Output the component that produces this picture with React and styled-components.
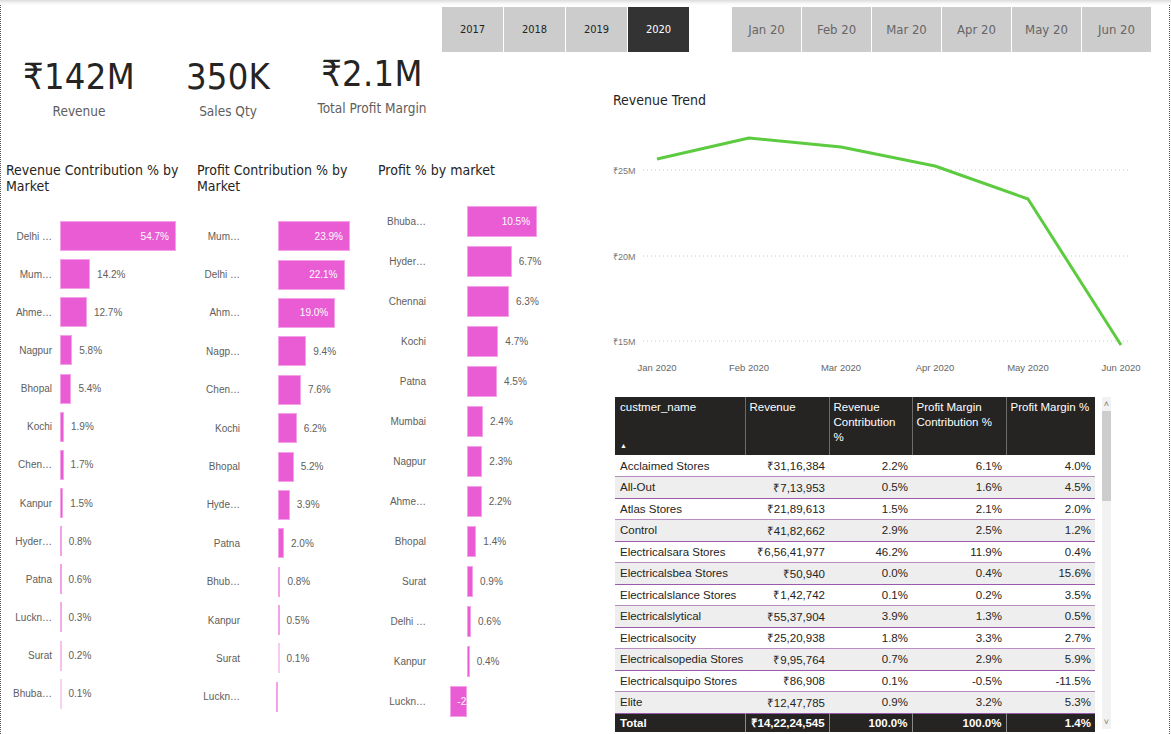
import React from "react";
import styled, { createGlobalStyle } from "styled-components";

const DIN = `"DejaVu Sans Condensed", "Liberation Sans Narrow", Roboto, sans-serif`;
const UI = `"Liberation Sans", Arial, sans-serif`;
const PINK = "#e95cd3";

const GlobalStyle = createGlobalStyle`
  html, body { margin: 0; padding: 0; background: #ffffff; }
  body { font-family: ${UI}; color: #252423; }
  * { box-sizing: border-box; }
`;

const years = ["2017", "2018", "2019", "2020"];
const months = ["Jan 20", "Feb 20", "Mar 20", "Apr 20", "May 20", "Jun 20"];

const kpis = [
  { value: "₹142M", label: "Revenue", width: 140 },
  { value: "350K", label: "Sales Qty", width: 158 },
  { value: "₹2.1M", label: "Total Profit Margin", width: 130, raise: true },
];

const revenueByMarket = [
  ["Delhi …", 54.7], ["Mum…", 14.2], ["Ahme…", 12.7], ["Nagpur", 5.8],
  ["Bhopal", 5.4], ["Kochi", 1.9], ["Chen…", 1.7], ["Kanpur", 1.5],
  ["Hyder…", 0.8], ["Patna", 0.6], ["Luckn…", 0.3], ["Surat", 0.2],
  ["Bhuba…", 0.1],
];

const profitContribution = [
  ["Mum…", 23.9], ["Delhi …", 22.1], ["Ahm…", 19.0], ["Nagp…", 9.4],
  ["Chen…", 7.6], ["Kochi", 6.2], ["Bhopal", 5.2], ["Hyde…", 3.9],
  ["Patna", 2.0], ["Bhub…", 0.8], ["Kanpur", 0.5], ["Surat", 0.1],
  ["Luckn…", -0.6, true],
];

const profitPct = [
  ["Bhuba…", 10.5], ["Hyder…", 6.7], ["Chennai", 6.3], ["Kochi", 4.7],
  ["Patna", 4.5], ["Mumbai", 2.4], ["Nagpur", 2.3], ["Ahme…", 2.2],
  ["Bhopal", 1.4], ["Surat", 0.9], ["Delhi …", 0.6], ["Kanpur", 0.4],
  ["Luckn…", -2.5],
];

const charts = [
  { title: ["Revenue Contribution % by", "Market"], data: revenueByMarket, width: 191, labelW: 46, zero: 8, scale: 2.12, rowH: 38.15, barH: 30, top: 23, inside: 30 },
  { title: ["Profit Contribution % by", "Market"], data: profitContribution, width: 181, labelW: 43, zero: 38, scale: 3.01, rowH: 38.4, barH: 30, top: 23, inside: 15 },
  { title: ["Profit % by market"], data: profitPct, width: 200, labelW: 48, zero: 41, scale: 6.67, rowH: 40, barH: 31, top: 7, inside: 9 },
];

const trend = [
  ["Jan 2020", 657, 159], ["Feb 2020", 749, 138], ["Mar 2020", 841, 147],
  ["Apr 2020", 935, 166], ["May 2020", 1028, 199], ["Jun 2020", 1121, 345],
];

const gridLines = [["₹25M", 170], ["₹20M", 256], ["₹15M", 341]];

const rows = [
  ["Acclaimed Stores", "₹31,16,384", "2.2%", "6.1%", "4.0%"],
  ["All-Out", "₹7,13,953", "0.5%", "1.6%", "4.5%"],
  ["Atlas Stores", "₹21,89,613", "1.5%", "2.1%", "2.0%"],
  ["Control", "₹41,82,662", "2.9%", "2.5%", "1.2%"],
  ["Electricalsara Stores", "₹6,56,41,977", "46.2%", "11.9%", "0.4%"],
  ["Electricalsbea Stores", "₹50,940", "0.0%", "0.4%", "15.6%"],
  ["Electricalslance Stores", "₹1,42,742", "0.1%", "0.2%", "3.5%"],
  ["Electricalslytical", "₹55,37,904", "3.9%", "1.3%", "0.5%"],
  ["Electricalsocity", "₹25,20,938", "1.8%", "3.3%", "2.7%"],
  ["Electricalsopedia Stores", "₹9,95,764", "0.7%", "2.9%", "5.9%"],
  ["Electricalsquipo Stores", "₹86,908", "0.1%", "-0.5%", "-11.5%"],
  ["Elite", "₹12,47,785", "0.9%", "3.2%", "5.3%"],
];

const BarChart = ({ title, data, width, labelW, zero, scale, rowH, barH, top, inside }) => (
  <ChartPanel $w={width}>
    <ChartTitle $lines={title.length}>
      {title.map((t) => (
        <div key={t}>{t}</div>
      ))}
    </ChartTitle>
    <BarList $top={top}>
      {data.map(([label, value, hideLabel]) => {
        const w = Math.abs(value) * scale;
        const neg = value < 0;
        const isInside = !hideLabel && (neg || value >= inside);
        return (
          <BarRow key={label} $h={rowH}>
            <Category $w={labelW}>{label}</Category>
            <Track $zero={zero}>
              <Bar
                $h={barH}
                $inside={isInside}
                $neg={neg}
                style={{
                  width: Math.max(w, 1.5),
                  marginLeft: neg ? -Math.max(w, 1.5) : 0,
                  opacity: w < 1 ? Math.max(0.4, w + 0.25) : 1,
                }}
              >
                {isInside && `${value.toFixed(1)}%`}
              </Bar>
              {!isInside && !hideLabel && <BarValue>{value.toFixed(1)}%</BarValue>}
            </Track>
          </BarRow>
        );
      })}
    </BarList>
  </ChartPanel>
);

const TrendChart = () => {
  const ox = 605;
  const oy = 120;
  const pts = trend.map(([, x, y]) => `${x - ox},${y - oy}`).join(" ");
  return (
    <svg width="560" height="262" viewBox="0 0 560 262">
      {gridLines.map(([label, y]) => (
        <g key={label}>
          <line x1="38" x2="523" y1={y - oy} y2={y - oy} stroke="#c8c8c8" strokeWidth="1" strokeDasharray="1 3" />
          <text x="8" y={y - oy + 3.5} fontSize="9" fill="#777" fontFamily={UI}>{label}</text>
        </g>
      ))}
      <polyline points={pts} fill="none" stroke="#5ccb3f" strokeWidth="3" strokeLinejoin="round" />
      {trend.map(([label, x]) => (
        <text key={label} x={x - ox} y={251} fontSize="9.5" fill="#666" textAnchor="middle" fontFamily={UI}>
          {label}
        </text>
      ))}
    </svg>
  );
};

export default function App() {
  return (
    <>
      <GlobalStyle />
      <Page>
        <TopShadow />
        <Canvas>
          <SlicerRow>
            <SlicerGroup>
              {years.map((y) => (
                <YearButton key={y} $active={y === "2020"}>{y}</YearButton>
              ))}
            </SlicerGroup>
            <SlicerGroup>
              {months.map((m) => (
                <MonthButton key={m}>{m}</MonthButton>
              ))}
            </SlicerGroup>
          </SlicerRow>
          <Body>
            <LeftColumn>
              <KpiRow>
                {kpis.map((k) => (
                  <Kpi key={k.label} $w={k.width} $raise={k.raise}>
                    <KpiValue>{k.value}</KpiValue>
                    <KpiLabel>{k.label}</KpiLabel>
                  </Kpi>
                ))}
              </KpiRow>
              <ChartsRow>
                {charts.map((c) => (
                  <BarChart key={c.title[0]} {...c} />
                ))}
              </ChartsRow>
            </LeftColumn>
            <RightColumn>
              <TrendTitle>Revenue Trend</TrendTitle>
              <TrendChart />
              <TableWrap>
                <Table>
                  <colgroup>
                    <col style={{ width: 130 }} />
                    <col style={{ width: 84 }} />
                    <col style={{ width: 83 }} />
                    <col style={{ width: 94 }} />
                    <col style={{ width: 89 }} />
                  </colgroup>
                  <thead>
                    <tr>
                      <Th $left>
                        custmer_name
                        <SortArrow>▲</SortArrow>
                      </Th>
                      <Th>Revenue</Th>
                      <Th>Revenue<br />Contribution<br />%</Th>
                      <Th>Profit Margin<br />Contribution %</Th>
                      <Th>Profit Margin %</Th>
                    </tr>
                  </thead>
                  <tbody>
                    {rows.map((r, i) => (
                      <Tr key={r[0]} $alt={i % 2 === 1}>
                        {r.map((cell, j) => (
                          <Td key={j} $left={j === 0}>{cell}</Td>
                        ))}
                      </Tr>
                    ))}
                  </tbody>
                  <tfoot>
                    <tr>
                      <TotalCell $left>Total</TotalCell>
                      <TotalCell>₹14,22,24,545</TotalCell>
                      <TotalCell>100.0%</TotalCell>
                      <TotalCell>100.0%</TotalCell>
                      <TotalCell>1.4%</TotalCell>
                    </tr>
                  </tfoot>
                </Table>
                <ScrollBar>
                  <ScrollArrow>˄</ScrollArrow>
                  <ScrollThumb />
                  <ScrollSpacer />
                  <ScrollArrow>˅</ScrollArrow>
                </ScrollBar>
              </TableWrap>
            </RightColumn>
          </Body>
        </Canvas>
      </Page>
    </>
  );
}

const Page = styled.div`
  width: 1171px;
  height: 734px;
  overflow: hidden;
  background: #fff;
  display: flex;
  flex-direction: column;
`;
const TopShadow = styled.div`
  height: 5px;
  flex: none;
  background: linear-gradient(#dcdcdc, #f4f4f4 60%, #ffffff);
`;
const Canvas = styled.div`
  flex: 1;
  margin-right: 1px;
  border-left: 1px dotted #555;
  border-right: 1px dotted #555;
  display: flex;
  flex-direction: column;
`;
const SlicerRow = styled.div`
  display: flex;
  gap: 43px;
  padding-left: 441px;
  margin-top: 2px;
  height: 45px;
`;
const SlicerGroup = styled.div`
  display: flex;
  gap: 1px;
`;
const YearButton = styled.div`
  width: 61px;
  display: flex;
  align-items: center;
  justify-content: center;
  font-family: ${DIN};
  font-size: 11px;
  color: ${(p) => (p.$active ? "#ffffff" : "#252423")};
  background: ${(p) => (p.$active ? "#333333" : "#cccccc")};
`;
const MonthButton = styled.div`
  width: 69px;
  display: flex;
  align-items: center;
  justify-content: center;
  font-family: ${DIN};
  font-size: 13px;
  color: #666;
  background: #cccccc;
`;
const Body = styled.div`
  flex: 1;
  display: grid;
  grid-template-columns: 604px 1fr;
`;
const LeftColumn = styled.div`
  display: flex;
  flex-direction: column;
`;
const KpiRow = styled.div`
  display: flex;
  padding-left: 8px;
  height: 110px;
`;
const Kpi = styled.div`
  width: ${(p) => p.$w}px;
  display: flex;
  flex-direction: column;
  align-items: center;
  margin-top: ${(p) => (p.$raise ? "0px" : "3px")};
`;
const KpiValue = styled.div`
  font-family: ${DIN};
  font-size: 36px;
  line-height: 44px;
  letter-spacing: 0.3px;
  color: #252423;
`;
const KpiLabel = styled.div`
  font-family: ${DIN};
  font-size: 13.5px;
  line-height: 18px;
  margin-top: 3px;
  color: #605e5c;
`;
const ChartsRow = styled.div`
  display: flex;
  padding-left: 5px;
`;
const ChartPanel = styled.div`
  width: ${(p) => p.$w}px;
  display: flex;
  flex-direction: column;
`;
const ChartTitle = styled.div`
  font-family: ${DIN};
  font-size: 14px;
  line-height: 16px;
  height: 32px;
  color: #252423;
  white-space: nowrap;
`;
const BarList = styled.div`
  margin-top: ${(p) => p.$top}px;
  display: flex;
  flex-direction: column;
`;
const BarRow = styled.div`
  height: ${(p) => p.$h}px;
  display: flex;
  align-items: center;
`;
const Category = styled.div`
  width: ${(p) => p.$w}px;
  flex: none;
  text-align: right;
  font-size: 10px;
  color: #605e5c;
  white-space: nowrap;
`;
const Track = styled.div`
  display: flex;
  align-items: center;
  padding-left: ${(p) => p.$zero}px;
`;
const Bar = styled.div`
  height: ${(p) => p.$h}px;
  flex: none;
  background: ${PINK};
  box-shadow: inset 0 0 0 1px #f3a2e8;
  display: flex;
  align-items: center;
  justify-content: ${(p) => (p.$neg ? "flex-start" : "flex-end")};
  padding: 0 ${(p) => (p.$inside ? "7px" : "0")};
  overflow: hidden;
  white-space: nowrap;
  font-size: 10px;
  color: #fff;
`;
const BarValue = styled.span`
  margin-left: 7px;
  font-size: 10px;
  color: #605e5c;
  white-space: nowrap;
`;
const RightColumn = styled.div`
  display: flex;
  flex-direction: column;
  padding-top: 40px;
`;
const TrendTitle = styled.div`
  font-family: ${DIN};
  font-size: 14px;
  line-height: 16px;
  margin-left: 8px;
  margin-bottom: 12px;
  color: #252423;
`;
const TableWrap = styled.div`
  display: flex;
  gap: 7px;
  margin-top: 15px;
  margin-left: 10px;
  align-items: flex-start;
`;
const Table = styled.table`
  width: 480px;
  border-collapse: collapse;
  table-layout: fixed;
  font-family: ${UI};
  font-size: 11.5px;
`;
const Th = styled.th`
  position: relative;
  height: 58px;
  background: #252423;
  color: #fff;
  font-weight: normal;
  text-align: left;
  vertical-align: top;
  line-height: 15px;
  padding: 3px 4px 0 ${(p) => (p.$left ? "5px" : "4px")};
  border-left: 1px solid #6d6d6d;
  &:first-child { border-left: none; }
`;
const SortArrow = styled.span`
  position: absolute;
  left: 5px;
  bottom: 2px;
  font-size: 7px;
`;
const Tr = styled.tr`
  height: 21.5px;
  background: ${(p) => (p.$alt ? "#eeeeee" : "#ffffff")};
  border-bottom: 1px solid ${(p) => (p.$alt ? "#9a5aab" : "#b98cc4")};
`;
const Td = styled.td`
  padding: 0 4px 0 5px;
  text-align: ${(p) => (p.$left ? "left" : "right")};
  white-space: nowrap;
  color: #252423;
`;
const TotalCell = styled.td`
  height: 19px;
  background: #252423;
  color: #fff;
  font-weight: bold;
  padding: 0 4px 0 5px;
  text-align: ${(p) => (p.$left ? "left" : "right")};
  border-left: 1px solid #8a8a8a;
  &:first-child { border-left: none; }
`;
const ScrollBar = styled.div`
  width: 9px;
  height: 332px;
  background: #f2f2f2;
  display: flex;
  flex-direction: column;
  align-items: center;
`;
const ScrollArrow = styled.div`
  height: 14px;
  font-size: 9px;
  line-height: 14px;
  color: #777;
`;
const ScrollThumb = styled.div`
  width: 9px;
  height: 90px;
  background: #cdcdcd;
`;
const ScrollSpacer = styled.div`
  flex: 1;
`;
